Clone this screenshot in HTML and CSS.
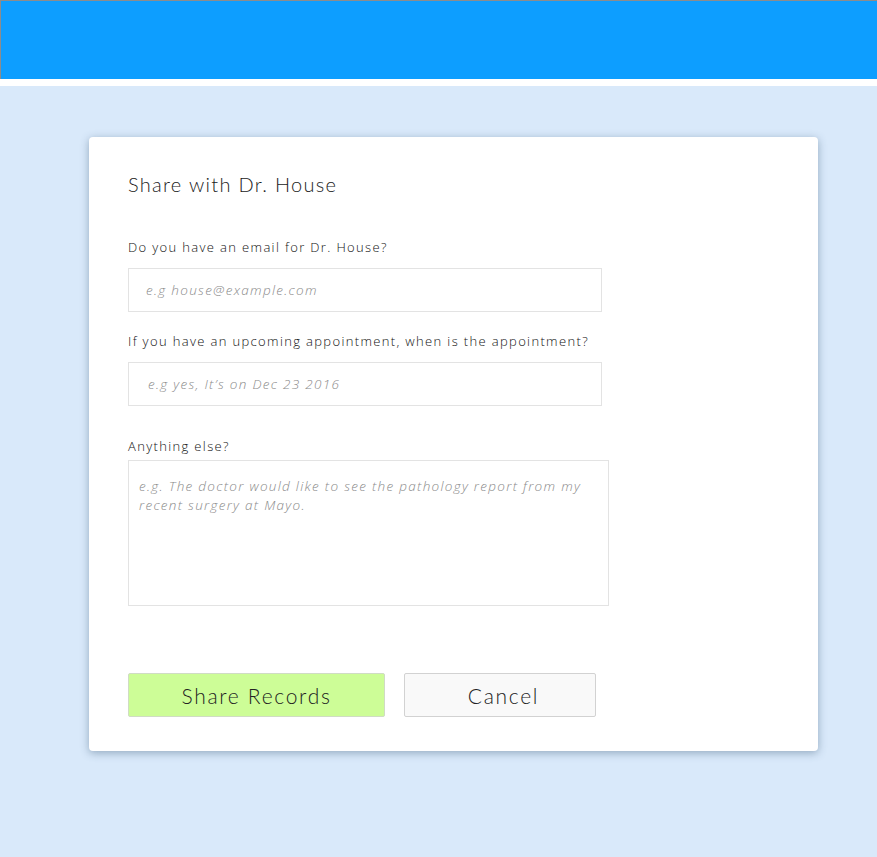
FILE: index.html
```html
<!DOCTYPE html>
<html>
<head>
<meta charset="utf-8">
<link rel="stylesheet" href="styles.css">
</head>
<body>
<header class="topbar"></header>
<main class="page">
  <section class="card">
    <h1 class="title">Share with Dr. House</h1>
    <label class="label">Do you have an email for Dr. House?</label>
    <input class="field field-email" type="text" placeholder="e.g house@example.com">
    <label class="label">If you have an upcoming appointment, when is the appointment?</label>
    <input class="field field-date" type="text" placeholder="e.g yes, It’s on Dec 23 2016">
    <label class="label label-else">Anything else?</label>
    <textarea class="area" placeholder="e.g. The doctor would like to see the pathology report from my recent surgery at Mayo."></textarea>
    <div class="actions">
      <button class="btn btn-share">Share Records</button>
      <button class="btn btn-cancel">Cancel</button>
    </div>
  </section>
</main>
</body>
</html>
```
FILE: styles.css
```css
html, body {
  margin: 0;
  padding: 0;
}
body {
  background: #ffffff;
  font-family: "Open Sans", "Noto Sans", sans-serif;
  height: 857px;
  overflow: hidden;
}
.topbar {
  height: 78px;
  background: #0d9eff;
  border-top: 1px solid #8c8c8c;
  border-left: 1px solid #8c8c8c;
}
.page {
  margin-top: 7px;
  background: #d9e9fa;
  height: 771px;
  padding-top: 51px;
  box-sizing: border-box;
}
.card {
  margin-left: 89px;
  width: 729px;
  height: 614px;
  box-sizing: border-box;
  background: #fff;
  border-radius: 4px;
  box-shadow: 0 2px 8px rgba(60, 90, 120, 0.45);
  padding: 35px 39px 0 39px;
  display: flex;
  flex-direction: column;
  align-items: flex-start;
}
.title {
  margin: 0;
  font-family: "Lato", "Noto Sans", sans-serif;
  font-weight: 300;
  font-size: 20px;
  line-height: 24px;
  letter-spacing: 1.3px;
  color: #222;
}
.label {
  font-size: 13px;
  font-weight: 300;
  line-height: 18px;
  letter-spacing: 1.35px;
  color: #111;
  margin-top: 42px;
}
.field + .label {
  margin-top: 20px;
}
.label-else.label {
  margin-top: 31px;
}
.field {
  margin-top: 12px;
  width: 474px;
  height: 44px;
  box-sizing: border-box;
  border: 1px solid #e3e3e3;
  border-radius: 0;
  padding: 0 17px;
  font-family: "Open Sans", sans-serif;
  font-size: 13.5px;
  outline: none;
}
.field-date {
  padding-left: 19px;
}
.field::placeholder,
.area::placeholder {
  font-style: italic;
  font-weight: 300;
  color: #8a8a8a;
  letter-spacing: 1.3px;
  opacity: 1;
}
.area {
  margin-top: 5px;
  width: 481px;
  height: 146px;
  box-sizing: border-box;
  border: 1px solid #e3e3e3;
  padding: 16px 10px;
  font-family: "Open Sans", sans-serif;
  font-size: 13.5px;
  line-height: 19px;
  resize: none;
  outline: none;
}
.actions {
  margin-top: 67px;
  display: flex;
  gap: 19px;
}
.btn {
  height: 44px;
  box-sizing: border-box;
  border: 1px solid #d2d2d2;
  border-radius: 2px;
  font-family: "Lato", "Noto Sans", sans-serif;
  font-weight: 300;
  font-size: 21px;
  letter-spacing: 1.7px;
  color: #222;
  padding: 0;
}
.btn-share {
  width: 257px;
  background: #cdfd97;
  border-color: #d0dcc4;
}
.btn-cancel {
  width: 192px;
  background: #f9f9f9;
  padding-left: 7px;
}
```
